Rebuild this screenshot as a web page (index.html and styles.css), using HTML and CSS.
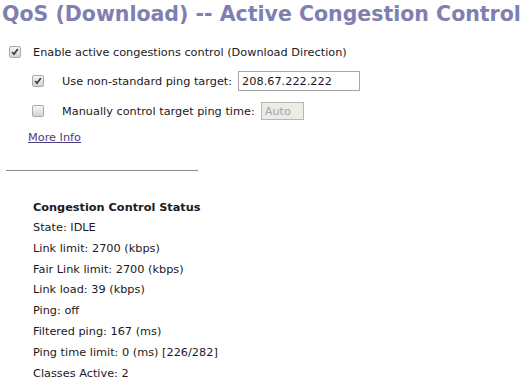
FILE: index.html
```html
<!DOCTYPE html>
<html lang="en">
<head>
  <meta charset="UTF-8">
  <title>QoS (Download) -- Active Congestion Control</title>
  <link rel="stylesheet" href="styles.css">
</head>
<body>
  <h1 class="title">QoS (Download) -- Active Congestion Control --</h1>

  <div class="options">
    <div class="row row-main">
      <span class="check on"><svg viewBox="0 0 12 12"><path d="M2.6 6 L4.8 8.6 L9.4 2.4" /></svg></span>
      <span class="label">Enable active congestions control (Download Direction)</span>
    </div>
    <div class="row row-sub row-target">
      <span class="check on"><svg viewBox="0 0 12 12"><path d="M2.6 6 L4.8 8.6 L9.4 2.4" /></svg></span>
      <span class="label">Use non-standard ping target:</span>
      <input class="field" type="text" value="208.67.222.222">
    </div>
    <div class="row row-sub row-time">
      <span class="check"></span>
      <span class="label">Manually control target ping time:</span>
      <input class="field field-auto" type="text" value="Auto" disabled>
    </div>
    <a class="more" href="#">More Info</a>
  </div>

  <hr class="divider">

  <div class="status">
    <h2>Congestion Control Status</h2>
    <p>State: IDLE</p>
    <p>Link limit: 2700 (kbps)</p>
    <p>Fair Link limit: 2700 (kbps)</p>
    <p>Link load: 39 (kbps)</p>
    <p>Ping: off</p>
    <p>Filtered ping: 167 (ms)</p>
    <p>Ping time limit: 0 (ms) [226/282]</p>
    <p>Classes Active: 2</p>
  </div>
</body>
</html>
```

FILE: styles.css
```css
* { margin: 0; padding: 0; box-sizing: border-box; }
body {
  font-family: "DejaVu Sans", Verdana, sans-serif;
  font-size: 11.3px;
  color: #1c1824;
  background: #fff;
  width: 520px;
  overflow: hidden;
}
.title {
  height: 40px;
  padding: 2px 0 0 2px;
  font-size: 20.5px;
  line-height: 24px;
  font-weight: bold;
  color: #7f80b0;
  white-space: nowrap;
  overflow: hidden;
}
.row { display: flex; align-items: center; }
.row-main { height: 24px; padding-left: 9px; }
.row-main .check { margin-right: 12px; }
.row-sub { padding-left: 32px; }
.row-sub .check { margin-right: 18px; }
.row-target { height: 34px; }
.row-time { height: 26px; }
.label { margin-right: 6px; }
.check {
  display: inline-block;
  width: 12px;
  height: 12px;
  border: 1px solid #a9a9a9;
  border-radius: 2px;
  background: linear-gradient(#f6f6f6, #d4d4d4);
}
.check svg { display: block; width: 10px; height: 10px; }
.check path { fill: none; stroke: #3a3a3a; stroke-width: 2; }
.field {
  font-family: inherit;
  font-size: 11.3px;
  color: #1c1824;
  height: 20px;
  width: 122px;
  padding: 0 3px;
  border: 1px solid #a5a5a5;
  background: #fff;
}
.field-auto {
  width: 43px;
  height: 18px;
  color: #a6a6a6;
  background: #ecebe6;
  border-color: #b8b8b0;
}
.more {
  display: inline-block;
  margin-left: 28px;
  line-height: 28px;
  color: #4b3c7e;
}
.divider {
  width: 192px;
  margin: 18px 0 0 6px;
  border: none;
  border-top: 1px solid #8a8a8a;
}
.status { padding: 26px 0 0 33px; }
.status h2 { font-size: 11.3px; font-weight: bold; line-height: 21px; }
.status p { line-height: 20.8px; }
```
